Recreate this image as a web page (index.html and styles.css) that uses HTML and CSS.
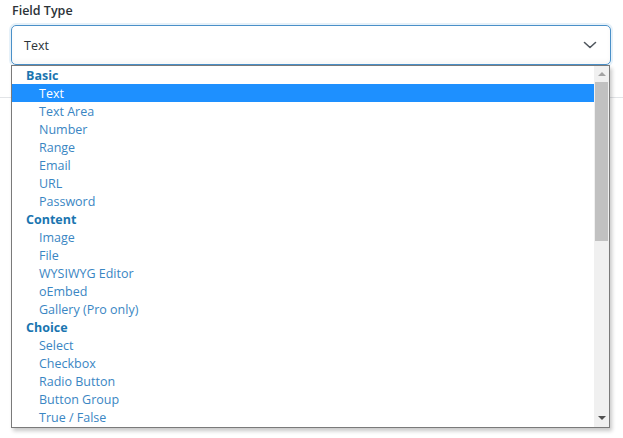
FILE: index.html
```html
<!DOCTYPE html>
<html lang="en">
<head>
    <meta charset="UTF-8">
    <title>Field Type</title>
    <link rel="stylesheet" href="styles.css">
</head>
<body>

    <div class="field">
        <label class="field-label">Field Type</label>
        <div class="select-box">
            <span class="select-value">Text</span>
            <svg class="chevron" width="14" height="8" viewBox="0 0 14 8">
                <path d="M1.5 1.5l5.5 5 5.5-5" fill="none" stroke="#50575e" stroke-width="1.6" stroke-linecap="round" stroke-linejoin="round"/>
            </svg>
        </div>
        <div class="divider"></div>

        <!-- Open dropdown list -->
        <div class="dropdown">
            <ul class="options">
                <li class="group">Basic</li>
                <li class="option selected">Text</li>
                <li class="option">Text Area</li>
                <li class="option">Number</li>
                <li class="option">Range</li>
                <li class="option">Email</li>
                <li class="option">URL</li>
                <li class="option">Password</li>
                <li class="group">Content</li>
                <li class="option">Image</li>
                <li class="option">File</li>
                <li class="option">WYSIWYG Editor</li>
                <li class="option">oEmbed</li>
                <li class="option">Gallery (Pro only)</li>
                <li class="group">Choice</li>
                <li class="option">Select</li>
                <li class="option">Checkbox</li>
                <li class="option">Radio Button</li>
                <li class="option">Button Group</li>
                <li class="option">True / False</li>
            </ul>
            <div class="scrollbar">
                <span class="arrow arrow-up"></span>
                <div class="thumb"></div>
                <div class="track"></div>
                <span class="arrow arrow-down"></span>
            </div>
        </div>
    </div>

</body>
</html>
```

FILE: styles.css
```css
body {
    margin: 0;
    font-family: 'Segoe UI', 'Open Sans', 'Noto Sans', sans-serif;
    background-color: #ffffff;
    color: #1d2327;
}

.field {
    position: relative;
    padding-top: 2px;
    min-height: 436px;
}

.field-label {
    display: block;
    margin-left: 12px;
    font-size: 12.5px;
    font-weight: 600;
    line-height: 18px;
    color: #2c3338;
}

.select-box {
    display: flex;
    align-items: center;
    justify-content: space-between;
    box-sizing: border-box;
    height: 40px;
    margin: 5px 12px 0 11px;
    padding: 0 13px 0 12px;
    border: 1px solid #4a90c8;
    border-radius: 5px;
    box-shadow: 0 0 0 2px #e6f1f9, inset 0 -3px 4px rgba(0, 0, 0, 0.03);
}

.select-value {
    font-size: 12.5px;
    color: #2c3338;
}

.chevron {
    display: block;
}

.divider {
    margin-top: 32px;
    height: 1px;
    background-color: #e2e4e7;
}

.dropdown {
    position: absolute;
    top: 65px;
    left: 11px;
    width: 599px;
    display: flex;
    box-sizing: border-box;
    border: 1px solid #7a7a7a;
    background-color: #ffffff;
    box-shadow: 2px 3px 4px rgba(0, 0, 0, 0.22);
}

.options {
    flex: 1;
    list-style: none;
    margin: 0;
    padding: 0 0 1px;
}

.options li {
    box-sizing: border-box;
    height: 18px;
    padding-top: 2px;
    line-height: 16px;
    font-size: 12.5px;
    white-space: nowrap;
}

.group {
    padding-left: 14px;
    font-weight: 700;
    color: #1a75b0;
}

.option {
    padding-left: 27px;
    color: #3a86c3;
}

.option.selected {
    background-color: #1e90ff;
    color: #ffffff;
}

.scrollbar {
    width: 15px;
    display: flex;
    flex-direction: column;
    align-items: center;
    background-color: #f0f0f0;
}

.arrow {
    display: block;
    width: 0;
    height: 0;
    border-left: 4px solid transparent;
    border-right: 4px solid transparent;
}

.arrow-up {
    margin: 6px 0 6px;
    border-bottom: 4px solid #a3a3a3;
}

.arrow-down {
    margin: 6px 0 7px;
    border-top: 4px solid #505050;
}

.thumb {
    width: 13px;
    height: 159px;
    background-color: #c1c1c1;
}

.track {
    flex: 1;
}
```
